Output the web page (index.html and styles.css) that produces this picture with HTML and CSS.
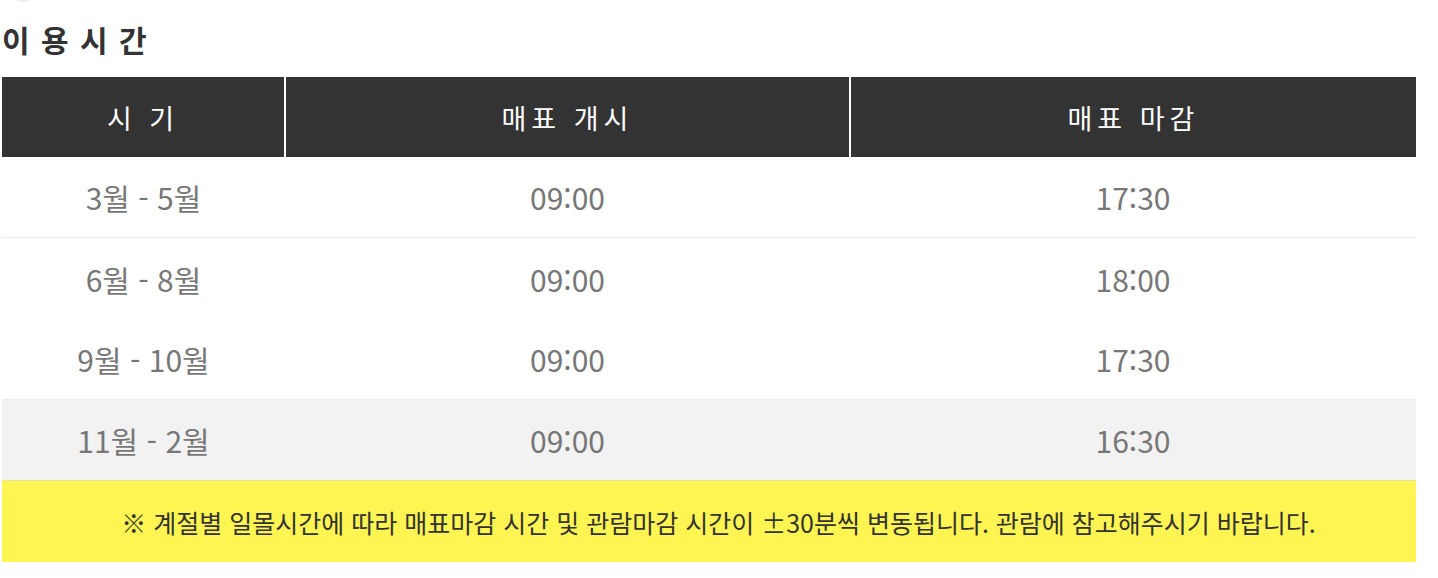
FILE: index.html
```html
<!DOCTYPE html>
<html lang="ko">
<head>
<meta charset="utf-8">
<link rel="stylesheet" href="styles.css">
</head>
<body>
<div class="page">
  <div class="dot"></div>
  <h2 class="title">이 용 시 간</h2>
  <table class="hours">
    <thead>
      <tr>
        <th class="c1">시 기</th>
        <th class="c2">매표 개시</th>
        <th class="c3">매표 마감</th>
      </tr>
    </thead>
    <tbody>
      <tr class="lined"><td>3월 - 5월</td><td>09:00</td><td>17:30</td></tr>
      <tr><td>6월 - 8월</td><td>09:00</td><td>18:00</td></tr>
      <tr class="lined"><td>9월 - 10월</td><td>09:00</td><td>17:30</td></tr>
      <tr class="winter"><td>11월 - 2월</td><td>09:00</td><td>16:30</td></tr>
      <tr class="note"><td colspan="3">※ 계절별 일몰시간에 따라 매표마감 시간 및 관람마감 시간이 ±30분씩 변동됩니다. 관람에 참고해주시기 바랍니다.</td></tr>
    </tbody>
  </table>
</div>
</body>
</html>
```

FILE: styles.css
```css
html, body {
  margin: 0;
  padding: 0;
  background: #fff;
}
body {
  font-family: "Noto Sans CJK KR", "Noto Sans", sans-serif;
}
.page {
  padding: 0 22px 0 2px;
  position: relative;
}
.dot {
  position: absolute;
  left: 8px;
  top: -28px;
  width: 30px;
  height: 30px;
  border-radius: 50%;
  background: #eeeeee;
}
.title {
  margin: 0;
  padding: 19px 0 0 0;
  height: 77px;
  box-sizing: border-box;
  font-size: 30px;
  font-weight: 700;
  letter-spacing: 1.5px;
  color: #333;
  line-height: 40px;
}
.hours {
  width: 1414px;
  border-collapse: collapse;
  table-layout: fixed;
}
.hours th {
  background: #333;
  color: #fff;
  height: 80px;
  padding: 0;
  font-size: 27px;
  font-weight: 400;
  letter-spacing: 5px;
  border-left: 2px solid #fff;
}
.hours th.c1 { width: 282px; border-left: none; }
.hours th.c2 { width: 563px; }
.hours td {
  height: 81px;
  padding: 0;
  text-align: center;
  font-size: 30px;
  color: #777;
}
.hours tr.lined td { border-bottom: 1px solid #ececec; height: 80px; }
.hours tr.winter td { background: #f2f2f2; border-top: 1px solid #e4e4e4; height: 80px; }
.hours tr.note td {
  background: #fef552;
  color: #333;
  font-size: 25px;
  height: 81px;
  padding-left: 19px;
  border-top: 1px solid #e8e4a0;
}
```
